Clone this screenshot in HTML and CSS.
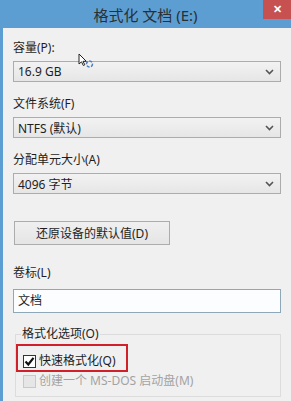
FILE: index.html
```html
<!DOCTYPE html>
<html lang="zh-CN">
<head>
<meta charset="UTF-8" />
<meta name="viewport" content="width=device-width, initial-scale=1" />
<title>格式化 文档 (E:)</title>
<link rel="stylesheet" href="styles.css">
</head>
<body>

<div class="window">
  <div class="titlebar">
    <span class="title">格式化 文档 (E:)</span>
    <button class="close" aria-label="关闭">&#x2715;</button>
  </div>

  <div class="content">
    <label class="field-label">容量(P):</label>
    <div class="select">
      <span>16.9 GB</span>
      <svg class="chevron" width="9" height="6" viewBox="0 0 9 6"><path d="M1 1 L4.5 4.5 L8 1" fill="none" stroke="#555" stroke-width="1.6"/></svg>
    </div>

    <label class="field-label gap">文件系统(F)</label>
    <div class="select">
      <span>NTFS (默认)</span>
      <svg class="chevron" width="9" height="6" viewBox="0 0 9 6"><path d="M1 1 L4.5 4.5 L8 1" fill="none" stroke="#555" stroke-width="1.6"/></svg>
    </div>

    <label class="field-label gap">分配单元大小(A)</label>
    <div class="select">
      <span>4096 字节</span>
      <svg class="chevron" width="9" height="6" viewBox="0 0 9 6"><path d="M1 1 L4.5 4.5 L8 1" fill="none" stroke="#555" stroke-width="1.6"/></svg>
    </div>

    <button class="restore">还原设备的默认值(D)</button>

    <label class="field-label volume">卷标(L)</label>
    <div class="textbox">文档</div>

    <fieldset class="options">
      <legend>格式化选项(O)</legend>
      <div class="check-row marked">
        <span class="box"><svg width="11" height="11" viewBox="0 0 11 11"><path d="M1.5 5.5 L4.3 8.5 L9.5 1.8" fill="none" stroke="#111" stroke-width="2.2"/></svg></span>
        <span>快速格式化(Q)</span>
      </div>
      <div class="check-row disabled">
        <span class="box"></span>
        <span>创建一个 MS-DOS 启动盘(M)</span>
      </div>
    </fieldset>
  </div>

  <!-- mouse pointer caught in the shot -->
  <svg class="pointer" width="16" height="16" viewBox="0 0 16 16">
    <path d="M1 1 L1 11 L3.5 8.8 L5.3 12.5 L6.8 11.8 L5 8.3 L8.3 8.3 Z" fill="#fff" stroke="#222" stroke-width="1"/>
    <circle cx="11.5" cy="11" r="3" fill="none" stroke="#4a7fc0" stroke-width="1.5" stroke-dasharray="3 1.5"/>
  </svg>
</div>

</body>
</html>
```

FILE: styles.css
```css
body {
  margin: 0;
  font-family: 'Segoe UI', 'Noto Sans', 'Noto Sans CJK SC', sans-serif;
  font-size: 12px;
  color: #1e1e1e;
  background: #f0f0f0;
}
.window {
  position: relative;
  width: 291px;
  height: 401px;
  overflow: hidden;
  display: flex;
  flex-direction: column;
}
.titlebar {
  position: relative;
  height: 28px;
  flex: none;
  background: #5c9ed1;
  display: flex;
  align-items: center;
  justify-content: center;
}
.title {
  font-size: 15px;
  color: #2a2f36;
  margin-top: 1px;
}
.close {
  position: absolute;
  top: 0;
  right: 0;
  width: 28px;
  height: 19px;
  border: none;
  padding: 0;
  background: #c75050;
  color: #fff;
  font-size: 11px;
  font-weight: 700;
  line-height: 19px;
}
.content {
  flex: 1;
  background: #f0f0f0;
  border-left: 3px solid #5c9ed1;
  padding: 12px 10px 0 10px;
  display: flex;
  flex-direction: column;
}
.field-label {
  display: block;
  line-height: 16px;
  margin-bottom: 5px;
}
.field-label.gap {
  margin-top: 14px;
}
.select {
  height: 21px;
  box-sizing: border-box;
  border: 1px solid #acacac;
  background: linear-gradient(#f2f2f2, #e6e6e6);
  display: flex;
  align-items: center;
  justify-content: space-between;
  padding: 0 6px 0 4px;
}
.chevron {
  flex: none;
}
.restore {
  align-self: flex-start;
  margin: 27px 0 0 1px;
  width: 156px;
  height: 24px;
  border: 1px solid #acacac;
  background: linear-gradient(#f0f0f0, #e5e5e5);
  font: inherit;
  color: #1e1e1e;
  padding: 0;
}
.field-label.volume {
  margin-top: 20px;
  margin-bottom: 8px;
}
.textbox {
  height: 24px;
  box-sizing: border-box;
  border: 1px solid #8fa8b8;
  background: #fbfdff;
  padding: 0 4px;
  line-height: 22px;
}
.options {
  margin: 13px 0 0 2px;
  padding: 0 5px 6px 5px;
  border: 1px solid #dcdcdc;
  width: 266px;
  box-sizing: border-box;
}
.options legend {
  padding: 0 1px;
  line-height: 16px;
  color: #1e1e1e;
}
.check-row {
  display: flex;
  align-items: center;
  gap: 3px;
  line-height: 18px;
}
.check-row .box {
  width: 13px;
  height: 13px;
  box-sizing: border-box;
  border: 1px solid #333;
  background: #fff;
  display: flex;
  align-items: center;
  justify-content: center;
  flex: none;
}
.check-row.marked {
  align-self: flex-start;
  width: 112px;
  height: 28px;
  box-sizing: border-box;
  margin: 2px 0 0 -5px;
  padding: 6px 0 0 5px;
  border: 2px solid #d0202a;
}
.check-row.disabled {
  padding-left: 2px;
  color: #a3a3a3;
}
.check-row.disabled .box {
  border-color: #c8c8c8;
  background: #e6e6e6;
}
.pointer {
  position: absolute;
  left: 78px;
  top: 53px;
}
```
